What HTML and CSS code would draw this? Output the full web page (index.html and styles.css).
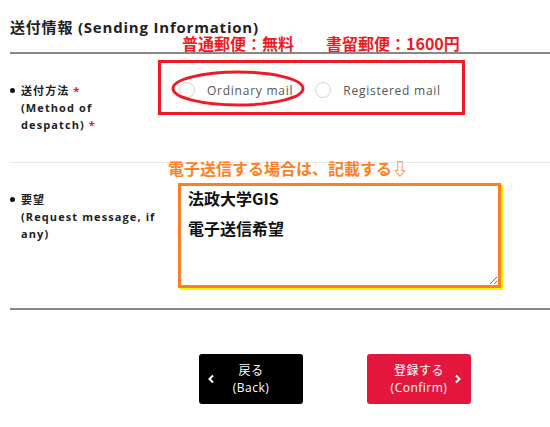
FILE: index.html
```html
<!DOCTYPE html>
<html lang="ja">
<head>
  <meta charset="UTF-8">
  <meta name="viewport" content="width=device-width, initial-scale=1.0">
  <title>送付情報</title>
  <link rel="stylesheet" href="styles.css">
</head>
<body>
  <div class="page">
    <h3 class="section-title">送付情報 (Sending Information)</h3>

    <!-- 注記（赤字） -->
    <p class="note note-red">普通郵便：無料　　書留郵便：1600円</p>

    <div class="form-row">
      <div class="label"><span class="dot"></span><div>送付方法 <em>*</em><br>(Method of<br>despatch) <em>*</em></div></div>
      <div class="field field-method">
        <div class="radio-box">
          <label class="radio"><span class="radio-mark"></span>Ordinary mail</label>
          <label class="radio"><span class="radio-mark"></span>Registered mail</label>
          <svg class="circle-mark" width="134" height="37" viewBox="0 0 134 37">
            <ellipse cx="67" cy="18.5" rx="65" ry="16.5" fill="none" stroke="#ed1c24" stroke-width="3"/>
          </svg>
        </div>
      </div>
    </div>

    <div class="form-row row-request">
      <p class="note note-orange">電子送信する場合は、記載する⇩</p>
      <div class="label"><span class="dot"></span><div>要望<br>(Request message, if<br>any)</div></div>
      <div class="field field-request">
        <textarea class="request-text">法政大学GIS

電子送信希望</textarea>
      </div>
    </div>

    <div class="actions">
      <button class="btn btn-back">
        <svg class="chev" width="8" height="10" viewBox="0 0 8 10"><polyline points="6,1.5 2.5,5 6,8.5" fill="none" stroke="#fff" stroke-width="2"/></svg>
        <span>戻る<br>(Back)</span>
        <i></i>
      </button>
      <button class="btn btn-confirm">
        <i></i>
        <span>登録する<br>(Confirm)</span>
        <svg class="chev" width="8" height="10" viewBox="0 0 8 10"><polyline points="2,1.5 5.5,5 2,8.5" fill="none" stroke="#fff" stroke-width="2"/></svg>
      </button>
    </div>
  </div>
</body>
</html>
```

FILE: styles.css
```css
body {
  margin: 0;
  background-color: #fff;
  font-family: "Open Sans", "Noto Sans CJK JP", sans-serif;
  color: #222;
}
.page {
  position: relative;
  padding-left: 10px;
}
.section-title {
  margin: 0;
  padding: 17px 0 15px;
  font-size: 15px;
  line-height: 20px;
  font-weight: bold;
  letter-spacing: 0.8px;
  border-bottom: 2px solid #888;
}
.note {
  position: absolute;
  margin: 0;
  font-family: "Noto Sans CJK JP", sans-serif;
  font-weight: bold;
  line-height: 20px;
  white-space: nowrap;
}
.note-red {
  left: 182px;
  top: 33px;
  font-size: 16px;
  color: #ed1c24;
}
.note-orange {
  left: 158px;
  top: -5px;
  font-size: 16px;
  color: #ff7f27;
}
.form-row {
  position: relative;
  display: grid;
  grid-template-columns: 148px 1fr;
  border-bottom: 1px solid #e8e8e8;
}
.row-request {
  border-bottom: 2px solid #888;
}
.label {
  display: flex;
  padding-top: 28px;
  font-size: 11px;
  line-height: 17px;
  font-weight: bold;
  letter-spacing: 1.1px;
  color: #222;
}
.label em {
  font-style: normal;
  color: #e3173e;
}
.dot {
  width: 5px;
  height: 5px;
  margin: 6px 6px 0 0;
  border-radius: 50%;
  background-color: #111;
  flex-shrink: 0;
}
.field-method {
  padding: 6px 0 47px;
}
.radio-box {
  position: relative;
  display: flex;
  gap: 22px;
  width: 307px;
  height: 55px;
  padding: 19px 0 0 18px;
  box-sizing: border-box;
  border: 3px solid #ed1c24;
}
.radio {
  display: flex;
  align-items: center;
  gap: 12px;
  height: 16px;
  font-size: 12px;
  color: #555;
  letter-spacing: 0.75px;
}
.radio-mark {
  width: 16px;
  height: 16px;
  border: 1px solid #d4d4d4;
  border-radius: 50%;
  box-sizing: border-box;
}
.circle-mark {
  position: absolute;
  left: 10px;
  top: 7px;
}
.field-request {
  padding: 20px 0 20px 20px;
}
.request-text {
  display: block;
  width: 323px;
  height: 105px;
  box-sizing: border-box;
  padding: 5px 7px;
  border: 3px solid #ff7f27;
  box-shadow: 2px 2px 0 #fff200;
  font-family: "Noto Sans CJK JP", sans-serif;
  font-size: 16px;
  font-weight: bold;
  line-height: 15px;
  color: #111;
  overflow: hidden;
}
.actions {
  display: flex;
  gap: 64px;
  margin: 44px 0 0 189px;
}
.btn {
  display: grid;
  grid-template-columns: 20px 1fr 20px;
  align-items: center;
  width: 104px;
  height: 50px;
  padding: 0;
  border: none;
  border-radius: 3px;
  color: #fff;
  font-family: "Open Sans", "Noto Sans CJK JP", sans-serif;
  font-size: 12px;
  line-height: 17px;
  letter-spacing: 0.5px;
}
.btn span {
  text-align: center;
}
.btn-back {
  background-color: #000;
}
.btn-back .chev {
  margin-left: 8px;
}
.btn-confirm {
  background-color: #e3173e;
}
.btn-confirm .chev {
  margin-left: 3px;
}
```
